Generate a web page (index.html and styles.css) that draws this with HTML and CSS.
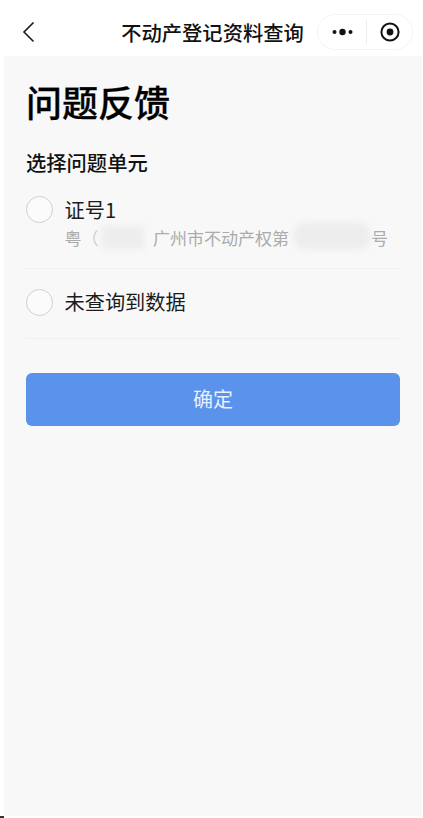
FILE: index.html
```html
<!DOCTYPE html>
<html lang="zh-CN">
<head>
<meta charset="utf-8">
<title>问题反馈</title>
<link rel="stylesheet" href="styles.css">
</head>
<body>
<header class="nav">
  <svg class="back" width="14" height="22" viewBox="0 0 14 22" aria-hidden="true"><path d="M11.5 1.5 2 11l9.5 9.5" fill="none" stroke="#1a1a1a" stroke-width="1.6"/></svg>
  <h1 class="nav-title">不动产登记资料查询</h1>
  <div class="capsule">
    <svg class="more" width="22" height="8" viewBox="0 0 22 8" aria-hidden="true"><circle cx="2.5" cy="4" r="2" fill="#111"/><circle cx="10.5" cy="4" r="3.2" fill="#111"/><circle cx="18.5" cy="4" r="2" fill="#111"/></svg>
    <span class="capsule-line"></span>
    <svg class="target" width="20" height="20" viewBox="0 0 20 20" aria-hidden="true"><circle cx="10" cy="10" r="8.6" fill="none" stroke="#111" stroke-width="2"/><circle cx="10" cy="10" r="3.4" fill="#111"/></svg>
  </div>
</header>
<main class="page">
  <h2 class="title">问题反馈</h2>
  <h3 class="label">选择问题单元</h3>
  <section class="option option-first">
    <span class="radio"></span>
    <div class="option-body">
      <div class="option-name">证号1</div>
      <div class="option-sub">
        <span class="sub-a">粤</span>
        <span class="sub-b">（</span>
        <span class="blob blob-a"></span>
        <span class="sub-c">广州市不动产权第</span>
        <span class="blob blob-b"></span>
        <span class="sub-d">号</span>
      </div>
    </div>
  </section>
  <section class="option option-second">
    <span class="radio"></span>
    <div class="option-body">
      <div class="option-name">未查询到数据</div>
    </div>
  </section>
  <button class="confirm" type="button">确定</button>
</main>
<div class="corner"></div>
</body>
</html>
```
FILE: styles.css
```css
* { box-sizing: border-box; }
html, body { margin: 0; padding: 0; }
body {
  width: 423px;
  height: 818px;
  overflow: hidden;
  background: #fff;
  font-family: "Noto Sans CJK SC", "Noto Sans", sans-serif;
  color: #111;
}
.nav {
  height: 56px;
  display: grid;
  grid-template-columns: 1fr auto 1fr;
  align-items: center;
  padding: 0 10px 0 12px;
}
.back { margin-left: 10px; display: block; margin-top: 8px; }
.nav-title {
  margin: 8px 0 0;
  font-size: 20.3px;
  line-height: 28px;
  font-weight: 500;
  white-space: nowrap;
  color: #111;
}
.capsule {
  justify-self: end;
  width: 96px;
  height: 36px;
  margin-top: 7px;
  border: 1px solid #f4f4f4;
  border-radius: 18px;
  display: flex;
  align-items: center;
  padding-left: 14px;
}
.capsule-line { width: 1px; height: 24px; background: #ededed; margin-left: 12px; }
.target { margin-left: 13px; }
.page {
  margin-left: 4px;
  width: 418px;
  height: 760px;
  background: #f8f8f8;
  padding: 0 22px;
}
.title {
  margin: 0;
  padding-top: 20px;
  font-size: 36px;
  line-height: 50px;
  font-weight: 500;
  -webkit-text-stroke: 0.3px #000;
  color: #000;
}
.label {
  margin: 22px 0 0;
  font-size: 20.3px;
  line-height: 28px;
  font-weight: 500;
  color: #111;
}
.option {
  display: flex;
  align-items: flex-start;
  border-bottom: 1px solid #f0f0f0;
}
.option-first { margin-top: 20px; height: 73px; }
.option-second { padding-top: 20px; height: 70px; }
.option-second .option-name { margin-top: -1px; }
.radio {
  flex: none;
  width: 27px;
  height: 27px;
  border: 1px solid #cfcfcf;
  border-radius: 50%;
  background: #fbfbfb;
}
.option-body { margin-left: 11.5px; min-width: 0; flex: 1; }
.option-name {
  font-size: 20.2px;
  line-height: 27px;
  color: #1c1c1c;
}
.option-sub {
  display: flex;
  align-items: center;
  height: 28px;
  padding-top: 1px;
  font-size: 17px;
  color: #ababab;
  white-space: nowrap;
}
.blob { display: block; background: #ededed; filter: blur(3px); }
.sub-a { width: 17px; }
.sub-b { width: 17px; color: #cdcdcd; }
.blob-a { width: 42px; height: 23px; margin-left: 3px; margin-right: 9.5px; }
.blob-b { width: 78px; height: 28px; margin-left: 4px; border-radius: 14px; margin-top: -4px; }
.sub-d { margin-left: 0; }
.confirm {
  display: block;
  width: 374px;
  height: 53px;
  margin-top: 34px;
  padding: 0 0 2px;
  border: 0;
  border-radius: 6px;
  background: #5a92ec;
  color: #e8f0fd;
  font: inherit;
  font-size: 20px;
}
.corner {
  width: 4px;
  height: 2px;
  background: #333;
}
```
